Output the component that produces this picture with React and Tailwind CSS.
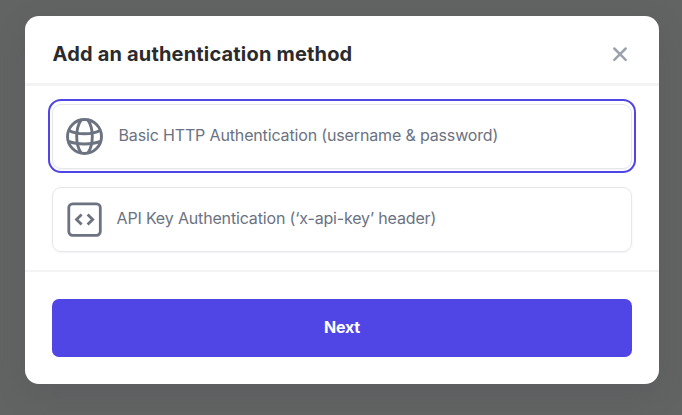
function GlobeIcon() {
  return (
    <svg width="38" height="38" viewBox="0 0 38 38" fill="none" stroke="currentColor" strokeWidth="2.9" className="block shrink-0">
      <circle cx="18.5" cy="18.5" r="17" />
      <path d="M15.2 1.8c-6 8.5-6 24.9 0 33.4M21.8 1.8c6 8.5 6 24.9 0 33.4" />
      <path d="M2.8 12.4c8 4.4 23.4 4.4 31.4 0M2.8 23.4c8 3.4 23.4 3.4 31.4 0" />
    </svg>
  );
}

function CodeIcon() {
  return (
    <svg width="36" height="36" viewBox="0 0 36 36" fill="none" stroke="currentColor" strokeWidth="2.8" className="block shrink-0">
      <rect x="1.8" y="1.8" width="31.5" height="31.5" rx="3.8" />
      <path d="M14.6 12.4 9.5 17.5l5.1 5.1M20.6 12.4l5.1 5.1-5.1 5.1" />
    </svg>
  );
}

export default function App() {
  return (
    <div className="h-[415px] w-[682px] overflow-hidden bg-[#626463] px-[25px] pt-4 font-['Inter',sans-serif]">
      <div className="flex h-[368px] w-[634px] flex-col rounded-[14px] bg-white shadow-[0_10px_24px_rgba(80,80,90,0.35)]">
        <header className="flex h-[70px] shrink-0 items-center justify-between border-b-[3px] border-[#f3f3f4] pr-[31px] pl-[27.5px] pt-[9px]">
          <h1 className="text-[20px] leading-7 font-bold tracking-[0.18px] text-[#2b2b2e]">Add an authentication method</h1>
          <button aria-label="Close" className="text-[#9ca3af]">
            <svg width="16" height="16" viewBox="0 0 16 16" fill="none" stroke="currentColor" strokeWidth="2.5" strokeLinecap="round" className="block">
              <path d="m2.3 2.5 11.4 11.4m0-11.4L2.3 13.9" />
            </svg>
          </button>
        </header>
        <main className="flex h-[186px] shrink-0 flex-col items-center gap-[14px] border-b-2 border-[#f3f3f4] pt-[13px]">
          <div className="h-[74px] w-[588px] shrink-0 rounded-[13px] border-2 border-[#4f46e5] px-[2px] pt-[3px] pb-[2px]">
            <button className="flex h-[65px] w-[580px] items-center rounded-[9px] border border-[#e5e7eb] pl-[13px] text-[#6b7280] shadow-xs">
              <GlobeIcon />
              <span className="-mt-[3px] ml-[14.5px] text-[16px] leading-6 tracking-[-0.15px] whitespace-nowrap">Basic HTTP Authentication (username &amp; password)</span>
            </button>
          </div>
          <button className="flex h-[65px] w-[580px] shrink-0 items-center rounded-[9px] border border-[#e5e7eb] pl-[14px] text-[#6b7280] shadow-xs">
            <CodeIcon />
            <span className="-mt-[3px] ml-[13.5px] text-[16px] leading-6 tracking-[-0.16px] whitespace-nowrap">API Key Authentication (‘x-api-key’ header)</span>
          </button>
        </main>
        <footer className="px-[27px] pt-[27px]">
          <button className="h-[58px] w-[580px] rounded-[7px] bg-[#4f46e5] pb-[2px] text-[16px] font-bold tracking-[-0.2px] text-white">Next</button>
        </footer>
      </div>
    </div>
  );
}
